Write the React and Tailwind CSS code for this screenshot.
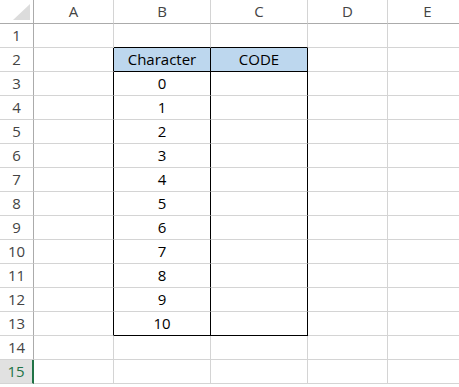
import React from 'react';

const COLS = ['A', 'B', 'C', 'D', 'E'];
const WIDTHS = ['w-[80px]', 'w-[97px]', 'w-[97px]', 'w-[80px]', 'w-[80px]'];
const ROWS = Array.from({ length: 15 }, (_, i) => i + 1);

const cellValue = (r, c) => {
  if (r === 2 && c === 1) return 'Character';
  if (r === 2 && c === 2) return 'CODE';
  if (c === 1 && r >= 3 && r <= 13) return String(r - 3);
  return '';
};

const Cell = ({ r, c }) => {
  const inTable = r >= 2 && r <= 13;
  const rightBlack = inTable && c <= 2;
  const bottomBlack = (c === 1 || c === 2) && (r === 1 || r === 2 || r === 13);
  const header = r === 2 && (c === 1 || c === 2);
  return (
    <div
      className={`${WIDTHS[c]} shrink-0 h-[24px] flex items-center justify-center border-r border-b text-[15px] text-black ${
        rightBlack ? 'border-r-black' : 'border-r-[#d4d4d4]'
      } ${bottomBlack ? 'border-b-black' : 'border-b-[#d4d4d4]'} ${header ? 'bg-[#bdd7ee]' : 'bg-white'}`}
    >
      {cellValue(r, c)}
    </div>
  );
};

export default function App() {
  return (
    <div className="w-[459px] h-[387px] overflow-hidden bg-white font-['Open_Sans',sans-serif]">
      <div className="flex h-[24px]">
        <div className="w-[34px] shrink-0 h-[24px] border-r border-b border-[#ababab] bg-white relative">
          <div className="absolute left-[13px] top-[4px] w-0 h-0 border-l-[17px] border-l-transparent border-b-[16px] border-b-[#dcdcdc]" />
        </div>
        {COLS.map((col, c) => (
          <div
            key={col}
            className={`${WIDTHS[c]} shrink-0 h-[24px] flex items-center justify-center border-r border-r-[#d4d4d4] border-b border-b-[#ababab] text-[15px] text-[#444]`}
          >
            {col}
          </div>
        ))}
      </div>
      {ROWS.map((r) => (
        <div key={r} className="flex h-[24px]">
          {r === 15 ? (
            <div className="w-[34px] shrink-0 h-[24px] flex items-center justify-center border-r-2 border-r-[#217346] border-b border-b-[#d4d4d4] bg-[#e1e1e1] text-[15px] text-[#217346]">
              {r}
            </div>
          ) : (
            <div className="w-[34px] shrink-0 h-[24px] flex items-center justify-center border-r border-r-[#ababab] border-b border-b-[#d4d4d4] bg-white text-[15px] text-[#444]">
              {r}
            </div>
          )}
          {COLS.map((col, c) => (
            <Cell key={col} r={r} c={c} />
          ))}
        </div>
      ))}
    </div>
  );
}
